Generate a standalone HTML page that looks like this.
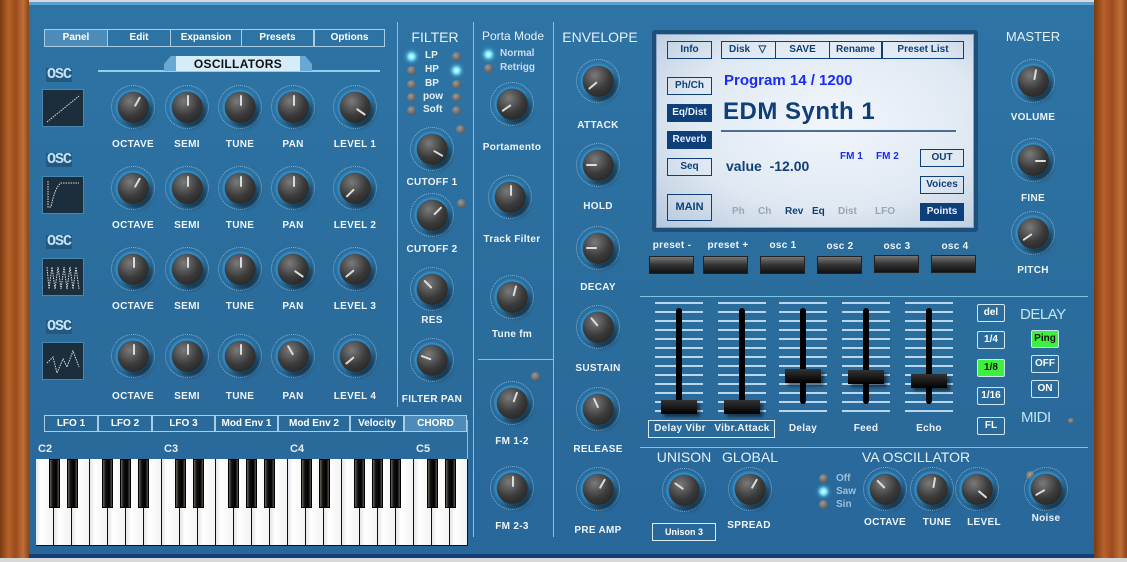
<!DOCTYPE html>
<html><head><meta charset="utf-8"><style>
*{margin:0;padding:0;box-sizing:border-box}
body{width:1127px;height:562px;overflow:hidden;background:#d8d8d8;font-family:"Liberation Sans",sans-serif;position:relative}
.a{position:absolute}
.wood{position:absolute;top:0;height:558px;background:linear-gradient(90deg,#7a3a12,#b8622a 30%,#9c4a1c 55%,#c0703a 80%,#8a4418)}
#panel{position:absolute;left:29px;top:2px;width:1065px;height:556px;background:linear-gradient(180deg,#2d74a5,#2a6c9c 60%,#28679a);border-top:3px solid #5aa0d0;border-bottom:4px solid #123e7a}
.k{position:absolute;width:44px;height:44px;margin:-22px 0 0 -22px;border-radius:50%;background:radial-gradient(circle,#235f8e 0 15px,#3a92c8 16px,#2a78ac 18px,rgba(0,0,0,0) 19px);border:1px dotted rgba(200,230,250,.6)}
.k b{position:absolute;left:6px;top:6px;width:31px;height:31px;border-radius:50%;background:radial-gradient(circle at 38% 30%,#7a7a7a,#3a3a3a 50%,#1b1b1b);box-shadow:3px 4px 4px rgba(0,0,0,.55)}
.k i{position:absolute;left:0;top:0;width:31px;height:31px}
.k i:after{content:"";position:absolute;left:14.5px;top:3px;width:2px;height:11px;background:#ddd;border-radius:1px}
.l{position:absolute;width:100px;margin-left:-50px;text-align:center;font-size:10px;font-weight:bold;color:#eef4fa;letter-spacing:.3px}
.t{position:absolute;width:140px;margin-left:-70px;text-align:center;font-size:13px;color:#e6f0f8}
.tab{position:absolute;height:18px;border:1px solid #a8cce4;color:#fff;font-size:10px;font-weight:bold;text-align:center;line-height:16px}
.led{position:absolute;width:9px;height:9px;margin:-4px 0 0 -4px;border-radius:50%;background:radial-gradient(circle at 40% 35%,#9a9a9a,#444)}
.led.on{background:radial-gradient(circle,#fff,#6de0ff 50%,#2a9ad0);box-shadow:0 0 4px #8ff}
.ll{position:absolute;font-size:10px;font-weight:bold;color:#e6eef6}
.vl{position:absolute;width:1px;background:#7cc4e0}
.hl{position:absolute;height:1px;background:#7cc4e0}
.db{position:absolute;border:1px solid #0e3f78;color:#0e3f78;font-size:10px;font-weight:bold;text-align:center;background:transparent}
.db.f{background:#0e3f78;color:#e8f0ff}
.pb{position:absolute;width:45px;height:18px;top:256px;background:linear-gradient(180deg,#777,#333 50%,#111);border:1px solid #222}
.fd{position:absolute;width:48px;height:110px;top:302px;background:repeating-linear-gradient(180deg,#b8d6ec 0 2px,transparent 2px 9px)}
.fd s{position:absolute;left:21px;top:6px;width:6px;height:96px;background:#000;border-radius:3px}
.fd u{position:absolute;left:6px;width:36px;height:14px;background:linear-gradient(180deg,#333,#000);box-shadow:3px 3px 3px rgba(0,0,0,.5)}
.sb{position:absolute;width:28px;height:18px;border:1px solid #cfe6f4;color:#fff;font-size:10px;font-weight:bold;text-align:center;line-height:16px;border-radius:2px}
.osc{position:absolute;font-family:"Liberation Mono",monospace;font-weight:bold;font-size:15px;color:#bfe2f6;letter-spacing:-1px;background:#24587e;padding:0 1px;line-height:14px}
.scr{position:absolute;width:42px;height:38px;background:#1c2e3c;border:1px solid #4a86b0}
.kb{position:absolute;left:36px;top:459px;width:432px;height:87px;background:#111}
.w{position:absolute;top:0;width:17px;height:86px;background:linear-gradient(90deg,#e6e6e6,#fff 30%,#f2f2f2)}
.bk{position:absolute;top:0;width:11px;height:49px;background:linear-gradient(90deg,#6a625a,#111 30%,#000 70%,#5a524a);border:1px solid #000}
</style></head><body>
<div class="wood" style="left:0;width:29px"></div>
<div class="wood" style="left:1094px;width:33px"></div>
<div id="panel"></div>

<div class="tab" style="left:44px;top:29px;width:64px;background:#4d8cb8">Panel</div>
<div class="tab" style="left:107px;top:29px;width:64px">Edit</div>
<div class="tab" style="left:170px;top:29px;width:72px">Expansion</div>
<div class="tab" style="left:241px;top:29px;width:73px">Presets</div>
<div class="tab" style="left:314px;top:29px;width:71px">Options</div>

<div class="hl" style="left:98px;top:70px;width:282px;height:2px;background:#8fd0ee"></div>
<div class="a" style="left:158px;top:56px;width:160px;height:15px;background:linear-gradient(90deg,transparent 0 6px,#6aa8d4 6px 18px,#d6ecf8 18px 142px,#6aa8d4 142px 154px,transparent 154px);clip-path:polygon(8% 0,92% 0,100% 100%,0 100%)"></div>
<div class="a" style="left:158px;top:57px;width:160px;text-align:center;font-size:12px;font-weight:900;color:#111;letter-spacing:.3px">OSCILLATORS</div>

<div class="osc" style="left:46px;top:68px">OSC</div>
<div class="osc" style="left:46px;top:153px">OSC</div>
<div class="osc" style="left:46px;top:235px">OSC</div>
<div class="osc" style="left:46px;top:320px">OSC</div>
<div class="scr" style="left:42px;top:89px"><svg width="40" height="36"><path d="M4 32 L36 6" stroke="#ddd" stroke-dasharray="1.5 1" fill="none"/></svg></div>
<div class="scr" style="left:42px;top:176px"><svg width="40" height="36"><path d="M5 4 L5 30 L8 30 Q12 10 18 6 L36 6" stroke="#ddd" stroke-dasharray="1.5 1" fill="none"/></svg></div>
<div class="scr" style="left:42px;top:258px"><svg width="40" height="36"><path d="M4 8 L6 30 L9 8 L12 30 L15 8 L18 30 L21 8 L24 30 L27 8 L30 30 L33 8 L36 30" stroke="#ddd" stroke-dasharray="1.5 1" fill="none"/></svg></div>
<div class="scr" style="left:42px;top:342px"><svg width="40" height="36"><path d="M4 20 L10 14 L14 30 L20 16 L24 24 L30 8 L36 24" stroke="#ddd" stroke-dasharray="1.5 1" fill="none"/></svg></div>

<div class="k" style="left:133px;top:107px"><b><i style="transform:rotate(30deg)"></i></b></div>
<div class="k" style="left:187px;top:107px"><b><i></i></b></div>
<div class="k" style="left:240px;top:107px"><b><i></i></b></div>
<div class="k" style="left:293px;top:107px"><b><i></i></b></div>
<div class="k" style="left:355px;top:107px"><b><i style="transform:rotate(125deg)"></i></b></div>
<div class="l" style="left:133px;top:139px">OCTAVE</div><div class="l" style="left:187px;top:139px">SEMI</div><div class="l" style="left:240px;top:139px">TUNE</div><div class="l" style="left:293px;top:139px">PAN</div><div class="l" style="left:355px;top:139px">LEVEL 1</div>

<div class="k" style="left:133px;top:188px"><b><i style="transform:rotate(30deg)"></i></b></div>
<div class="k" style="left:187px;top:188px"><b><i></i></b></div>
<div class="k" style="left:240px;top:188px"><b><i></i></b></div>
<div class="k" style="left:293px;top:188px"><b><i></i></b></div>
<div class="k" style="left:355px;top:188px"><b><i style="transform:rotate(-135deg)"></i></b></div>
<div class="l" style="left:133px;top:220px">OCTAVE</div><div class="l" style="left:187px;top:220px">SEMI</div><div class="l" style="left:240px;top:220px">TUNE</div><div class="l" style="left:293px;top:220px">PAN</div><div class="l" style="left:355px;top:220px">LEVEL 2</div>

<div class="k" style="left:133px;top:269px"><b><i></i></b></div>
<div class="k" style="left:187px;top:269px"><b><i></i></b></div>
<div class="k" style="left:240px;top:269px"><b><i></i></b></div>
<div class="k" style="left:293px;top:269px"><b><i style="transform:rotate(125deg)"></i></b></div>
<div class="k" style="left:355px;top:269px"><b><i style="transform:rotate(-130deg)"></i></b></div>
<div class="l" style="left:133px;top:301px">OCTAVE</div><div class="l" style="left:187px;top:301px">SEMI</div><div class="l" style="left:240px;top:301px">TUNE</div><div class="l" style="left:293px;top:301px">PAN</div><div class="l" style="left:355px;top:301px">LEVEL 3</div>

<div class="k" style="left:133px;top:356px"><b><i></i></b></div>
<div class="k" style="left:187px;top:356px"><b><i></i></b></div>
<div class="k" style="left:240px;top:356px"><b><i></i></b></div>
<div class="k" style="left:293px;top:356px"><b><i style="transform:rotate(-30deg)"></i></b></div>
<div class="k" style="left:355px;top:356px"><b><i style="transform:rotate(-130deg)"></i></b></div>
<div class="l" style="left:133px;top:391px">OCTAVE</div><div class="l" style="left:187px;top:391px">SEMI</div><div class="l" style="left:240px;top:391px">TUNE</div><div class="l" style="left:293px;top:391px">PAN</div><div class="l" style="left:355px;top:391px">LEVEL 4</div>

<div class="vl" style="left:397px;top:22px;height:385px"></div>
<div class="vl" style="left:473px;top:22px;height:515px"></div>
<div class="vl" style="left:553px;top:22px;height:515px"></div>
<div class="vl" style="left:467px;top:420px;height:125px"></div>
<div class="hl" style="left:478px;top:359px;width:75px"></div>
<div class="hl" style="left:640px;top:296px;width:448px"></div>
<div class="hl" style="left:640px;top:447px;width:448px"></div>

<div class="t" style="left:435px;top:29px;font-size:14px">FILTER</div>
<div class="led on" style="left:411px;top:56px"></div><div class="led" style="left:456px;top:56px"></div><div class="ll" style="left:425px;top:50px">LP</div>
<div class="led" style="left:411px;top:70px"></div><div class="led on" style="left:456px;top:70px"></div><div class="ll" style="left:425px;top:64px">HP</div>
<div class="led" style="left:411px;top:84px"></div><div class="led" style="left:456px;top:84px"></div><div class="ll" style="left:425px;top:78px">BP</div>
<div class="led" style="left:411px;top:97px"></div><div class="led" style="left:456px;top:97px"></div><div class="ll" style="left:423px;top:91px">pow</div>
<div class="led" style="left:411px;top:110px"></div><div class="led" style="left:456px;top:110px"></div><div class="ll" style="left:423px;top:104px">Soft</div>
<div class="led" style="left:460px;top:129px"></div><div class="led" style="left:461px;top:203px"></div>
<div class="k" style="left:432px;top:149px"><b><i style="transform:rotate(120deg)"></i></b></div>
<div class="l" style="left:432px;top:177px">CUTOFF 1</div>
<div class="k" style="left:432px;top:215px"><b><i style="transform:rotate(45deg)"></i></b></div>
<div class="l" style="left:432px;top:244px">CUTOFF 2</div>
<div class="k" style="left:432px;top:289px"><b><i style="transform:rotate(-45deg)"></i></b></div>
<div class="l" style="left:432px;top:315px">RES</div>
<div class="k" style="left:432px;top:360px"><b><i style="transform:rotate(-70deg)"></i></b></div>
<div class="l" style="left:432px;top:394px">FILTER PAN</div>

<div class="t" style="left:513px;top:29px;font-size:12px">Porta Mode</div>
<div class="led on" style="left:488px;top:54px"></div><div class="ll" style="left:500px;top:48px;color:#c8dcec">Normal</div>
<div class="led" style="left:488px;top:68px"></div><div class="ll" style="left:500px;top:62px;color:#c8dcec">Retrigg</div>
<div class="k" style="left:512px;top:104px"><b><i style="transform:rotate(-125deg)"></i></b></div>
<div class="l" style="left:512px;top:142px">Portamento</div>
<div class="k" style="left:510px;top:197px"><b><i></i></b></div>
<div class="l" style="left:512px;top:234px">Track Filter</div>
<div class="k" style="left:512px;top:297px"><b><i style="transform:rotate(15deg)"></i></b></div>
<div class="l" style="left:512px;top:329px">Tune fm</div>
<div class="led" style="left:535px;top:376px"></div>
<div class="k" style="left:512px;top:403px"><b><i style="transform:rotate(20deg)"></i></b></div>
<div class="l" style="left:512px;top:436px">FM 1-2</div>
<div class="k" style="left:512px;top:488px"><b><i></i></b></div>
<div class="l" style="left:512px;top:521px">FM 2-3</div>

<div class="t" style="left:600px;top:29px;font-size:14px">ENVELOPE</div>
<div class="k" style="left:598px;top:81px"><b><i style="transform:rotate(-130deg)"></i></b></div>
<div class="l" style="left:598px;top:120px">ATTACK</div>
<div class="k" style="left:598px;top:165px"><b><i style="transform:rotate(-90deg)"></i></b></div>
<div class="l" style="left:598px;top:201px">HOLD</div>
<div class="k" style="left:598px;top:248px"><b><i style="transform:rotate(-90deg)"></i></b></div>
<div class="l" style="left:598px;top:282px">DECAY</div>
<div class="k" style="left:598px;top:327px"><b><i style="transform:rotate(-40deg)"></i></b></div>
<div class="l" style="left:598px;top:363px">SUSTAIN</div>
<div class="k" style="left:598px;top:409px"><b><i style="transform:rotate(-25deg)"></i></b></div>
<div class="l" style="left:598px;top:444px">RELEASE</div>
<div class="k" style="left:598px;top:489px"><b><i style="transform:rotate(30deg)"></i></b></div>
<div class="l" style="left:598px;top:525px">PRE AMP</div>

<div class="a" style="left:652px;top:30px;width:326px;height:202px;background:#1f4f78;border-radius:3px"></div>
<div class="a" style="left:656px;top:34px;width:318px;height:194px;background:radial-gradient(ellipse at 55% 45%,#f2f6fb,#dfe8f2 60%,#b7c8dc);border:1px solid #8aa6c4"></div>
<div class="db" style="left:667px;top:41px;width:45px;height:18px;line-height:16px">Info</div>
<div class="db" style="left:721px;top:41px;width:55px;height:18px;line-height:16px;text-align:left;padding-left:7px">Disk &nbsp;&nbsp;▽</div>
<div class="db" style="left:775px;top:41px;width:55px;height:18px;line-height:16px">SAVE</div>
<div class="db" style="left:829px;top:41px;width:53px;height:18px;line-height:16px">Rename</div>
<div class="db" style="left:882px;top:41px;width:82px;height:18px;line-height:16px">Preset List</div>
<div class="db" style="left:667px;top:77px;width:45px;height:18px;line-height:16px">Ph/Ch</div>
<div class="db f" style="left:667px;top:104px;width:45px;height:18px;line-height:16px">Eq/Dist</div>
<div class="db f" style="left:667px;top:131px;width:45px;height:18px;line-height:16px">Reverb</div>
<div class="db" style="left:667px;top:158px;width:45px;height:18px;line-height:16px">Seq</div>
<div class="db" style="left:667px;top:194px;width:45px;height:27px;line-height:25px;font-size:11px">MAIN</div>
<div class="a" style="left:724px;top:72px;font-size:15px;font-weight:bold;color:#1a2cf0">Program 14 / 1200</div>
<div class="a" style="left:723px;top:98px;font-size:24px;font-weight:bold;color:#0e3f78;letter-spacing:.5px">EDM Synth 1</div>
<div class="a" style="left:721px;top:130px;width:235px;height:2px;background:#4a6e96"></div>
<div class="a" style="left:726px;top:158px;font-size:14px;font-weight:bold;color:#0e3f78">value &nbsp;-12.00</div>
<div class="a" style="left:840px;top:151px;font-size:10px;font-weight:bold;color:#1a2cf0">FM 1</div>
<div class="a" style="left:876px;top:151px;font-size:10px;font-weight:bold;color:#1a2cf0">FM 2</div>
<div class="db" style="left:920px;top:149px;width:44px;height:18px;line-height:16px">OUT</div>
<div class="db" style="left:920px;top:176px;width:44px;height:18px;line-height:16px">Voices</div>
<div class="db f" style="left:920px;top:203px;width:44px;height:18px;line-height:16px">Points</div>
<div class="a" style="left:732px;top:206px;font-size:10px;font-weight:bold;color:#9aa6b4">Ph</div>
<div class="a" style="left:758px;top:206px;font-size:10px;font-weight:bold;color:#9aa6b4">Ch</div>
<div class="a" style="left:785px;top:206px;font-size:10px;font-weight:bold;color:#0e3f78">Rev</div>
<div class="a" style="left:812px;top:206px;font-size:10px;font-weight:bold;color:#0e3f78">Eq</div>
<div class="a" style="left:838px;top:206px;font-size:10px;font-weight:bold;color:#9aa6b4">Dist</div>
<div class="a" style="left:875px;top:206px;font-size:10px;font-weight:bold;color:#9aa6b4">LFO</div>

<div class="l" style="left:672px;top:240px">preset -</div><div class="l" style="left:728px;top:240px">preset +</div><div class="l" style="left:783px;top:240px">osc 1</div><div class="l" style="left:840px;top:241px">osc 2</div><div class="l" style="left:897px;top:241px">osc 3</div><div class="l" style="left:955px;top:241px">osc 4</div>
<div class="pb" style="left:649px"></div><div class="pb" style="left:703px"></div><div class="pb" style="left:760px"></div><div class="pb" style="left:817px"></div><div class="pb" style="left:874px;top:255px"></div><div class="pb" style="left:931px;top:255px"></div>

<div class="t" style="left:1033px;top:29px;font-size:13px">MASTER</div>
<div class="k" style="left:1033px;top:81px"><b><i style="transform:rotate(10deg)"></i></b></div>
<div class="l" style="left:1033px;top:112px">VOLUME</div>
<div class="k" style="left:1033px;top:160px"><b><i style="transform:rotate(90deg)"></i></b></div>
<div class="l" style="left:1033px;top:193px">FINE</div>
<div class="k" style="left:1033px;top:233px"><b><i style="transform:rotate(-125deg)"></i></b></div>
<div class="l" style="left:1033px;top:265px">PITCH</div>

<div class="fd" style="left:655px"><s></s><u style="top:98px"></u></div>
<div class="fd" style="left:718px"><s></s><u style="top:98px"></u></div>
<div class="fd" style="left:779px"><s></s><u style="top:67px"></u></div>
<div class="fd" style="left:842px"><s></s><u style="top:68px"></u></div>
<div class="fd" style="left:905px"><s></s><u style="top:72px"></u></div>
<div class="a" style="left:648px;top:420px;width:127px;height:18px;border:1px solid #d8ecf8"></div>
<div class="l" style="left:680px;top:423px">Delay Vibr</div><div class="l" style="left:742px;top:423px">Vibr.Attack</div>
<div class="l" style="left:803px;top:423px">Delay</div><div class="l" style="left:866px;top:423px">Feed</div><div class="l" style="left:929px;top:423px">Echo</div>
<div class="sb" style="left:977px;top:304px">del</div>
<div class="sb" style="left:977px;top:331px">1/4</div>
<div class="sb" style="left:977px;top:359px;background:#3ef03e;color:#111">1/8</div>
<div class="sb" style="left:977px;top:387px">1/16</div>
<div class="sb" style="left:977px;top:417px">FL</div>
<div class="a" style="left:1020px;top:306px;font-size:15px;color:#bfe6f2;letter-spacing:-.5px">DELAY</div>
<div class="sb" style="left:1031px;top:330px;background:#3ef03e;color:#111">Ping</div>
<div class="sb" style="left:1031px;top:355px">OFF</div>
<div class="sb" style="left:1031px;top:380px">ON</div>
<div class="a" style="left:1021px;top:409px;font-size:15px;color:#bfe6f2;letter-spacing:-.5px">MIDI</div>
<div class="led" style="left:1071px;top:421px;width:6px;height:6px;margin:-3px"></div>

<div class="t" style="left:684px;top:449px;font-size:14px">UNISON</div>
<div class="t" style="left:750px;top:449px;font-size:14px">GLOBAL</div>
<div class="k" style="left:684px;top:490px"><b><i style="transform:rotate(-55deg)"></i></b></div>
<div class="k" style="left:750px;top:489px"><b><i style="transform:rotate(30deg)"></i></b></div>
<div class="a" style="left:652px;top:523px;width:64px;height:18px;border:1px solid #d8ecf8;color:#fff;font-size:9px;font-weight:bold;text-align:center;line-height:16px">Unison 3</div>
<div class="l" style="left:749px;top:520px">SPREAD</div>
<div class="t" style="left:916px;top:449px;font-size:14px">VA OSCILLATOR</div>
<div class="led" style="left:823px;top:478px"></div><div class="ll" style="left:836px;top:473px;color:#9cc0dc">Off</div>
<div class="led on" style="left:823px;top:491px"></div><div class="ll" style="left:836px;top:486px;color:#9cc0dc">Saw</div>
<div class="led" style="left:823px;top:504px"></div><div class="ll" style="left:836px;top:499px;color:#9cc0dc">Sin</div>
<div class="k" style="left:885px;top:489px"><b><i style="transform:rotate(-45deg)"></i></b></div>
<div class="k" style="left:932px;top:489px"><b><i style="transform:rotate(10deg)"></i></b></div>
<div class="k" style="left:977px;top:489px"><b><i style="transform:rotate(130deg)"></i></b></div>
<div class="l" style="left:885px;top:517px">OCTAVE</div><div class="l" style="left:937px;top:517px">TUNE</div><div class="l" style="left:984px;top:517px">LEVEL</div>
<div class="led" style="left:1030px;top:475px"></div>
<div class="k" style="left:1046px;top:489px"><b><i style="transform:rotate(-120deg)"></i></b></div>
<div class="l" style="left:1046px;top:513px">Noise</div>

<div class="tab" style="left:44px;top:415px;width:54px;height:17px">LFO 1</div>
<div class="tab" style="left:98px;top:415px;width:54px;height:17px">LFO 2</div>
<div class="tab" style="left:152px;top:415px;width:63px;height:17px">LFO 3</div>
<div class="tab" style="left:215px;top:415px;width:63px;height:17px">Mod Env 1</div>
<div class="tab" style="left:278px;top:415px;width:72px;height:17px">Mod Env 2</div>
<div class="tab" style="left:350px;top:415px;width:54px;height:17px">Velocity</div>
<div class="tab" style="left:404px;top:415px;width:63px;height:17px;background:#4d8cb8">CHORD</div>
<div class="ll" style="left:38px;top:443px;font-size:11px">C2</div>
<div class="ll" style="left:164px;top:443px;font-size:11px">C3</div>
<div class="ll" style="left:290px;top:443px;font-size:11px">C4</div>
<div class="ll" style="left:416px;top:443px;font-size:11px">C5</div>

<div class="kb">
<div class="w" style="left:0"></div><div class="w" style="left:18px"></div><div class="w" style="left:36px"></div><div class="w" style="left:54px"></div><div class="w" style="left:72px"></div><div class="w" style="left:90px"></div><div class="w" style="left:108px"></div>
<div class="w" style="left:126px"></div><div class="w" style="left:144px"></div><div class="w" style="left:162px"></div><div class="w" style="left:180px"></div><div class="w" style="left:198px"></div><div class="w" style="left:216px"></div><div class="w" style="left:234px"></div>
<div class="w" style="left:252px"></div><div class="w" style="left:270px"></div><div class="w" style="left:288px"></div><div class="w" style="left:306px"></div><div class="w" style="left:324px"></div><div class="w" style="left:342px"></div><div class="w" style="left:360px"></div>
<div class="w" style="left:378px"></div><div class="w" style="left:396px"></div><div class="w" style="left:414px"></div>
<div class="bk" style="left:13px"></div><div class="bk" style="left:31px"></div><div class="bk" style="left:66px"></div><div class="bk" style="left:84px"></div><div class="bk" style="left:102px"></div>
<div class="bk" style="left:139px"></div><div class="bk" style="left:157px"></div><div class="bk" style="left:192px"></div><div class="bk" style="left:210px"></div><div class="bk" style="left:228px"></div>
<div class="bk" style="left:265px"></div><div class="bk" style="left:283px"></div><div class="bk" style="left:318px"></div><div class="bk" style="left:336px"></div><div class="bk" style="left:354px"></div>
<div class="bk" style="left:391px"></div><div class="bk" style="left:409px"></div>
</div>
</body></html>
